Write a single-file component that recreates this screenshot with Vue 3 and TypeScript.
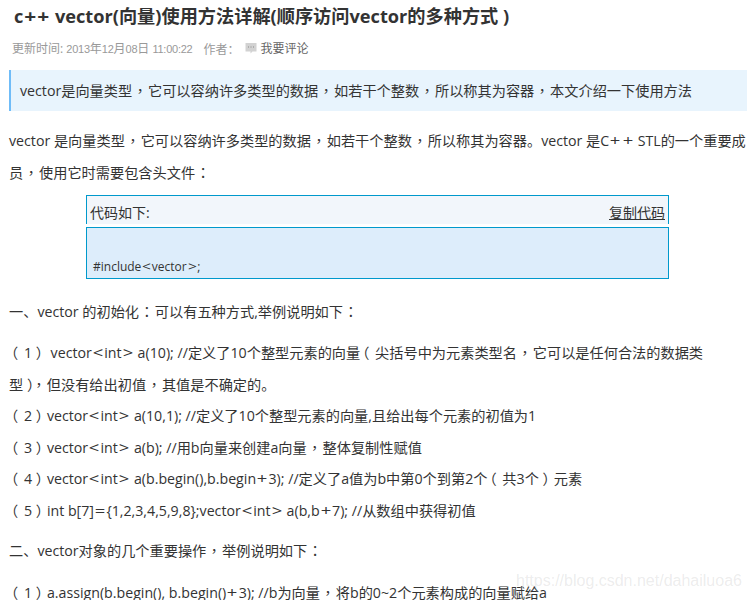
<script setup lang="ts">
interface Segment { text: string; kind: string }

function kindOf(part: string): string {
  if (part === '，' || part === '：') return 'punct'
  if (part === '（') return 'open'
  if (part === '）') return 'close'
  if (part === '<' || part === '>' || part === '+' || part === '=') return 'sym'
  return ''
}

function split(text: string): Segment[] {
  return text
    .split(/([，：（）<>+=])/)
    .filter((part) => part !== '')
    .map((part) => ({ text: part, kind: kindOf(part) }))
}

const intro = split('vector 是向量类型，它可以容纳许多类型的数据，如若干个整数，所以称其为容器。vector 是C++ STL的一个重要成\n员，使用它时需要包含头文件：')
const summary = split('vector是向量类型，它可以容纳许多类型的数据，如若干个整数，所以称其为容器，本文介绍一下使用方法')
const code = split('#include<vector>;')
const headOne = split('一、vector 的初始化：可以有五种方式,举例说明如下：')
const headTwo = split('二、vector对象的几个重要操作，举例说明如下：')
const headThree = split('（ 1 ）a.assign(b.begin(), b.begin()+3); //b为向量，将b的0~2个元素构成的向量赋给a')
const lines: Segment[][] = [
  '（ 1 ） vector<int> a(10); //定义了10个整型元素的向量（ 尖括号中为元素类型名，它可以是任何合法的数据类\n型 ），但没有给出初值，其值是不确定的。',
  '（ 2 ）vector<int> a(10,1); //定义了10个整型元素的向量,且给出每个元素的初值为1',
  '（ 3 ）vector<int> a(b); //用b向量来创建a向量，整体复制性赋值',
  '（ 4 ）vector<int> a(b.begin(),b.begin+3); //定义了a值为b中第0个到第2个（ 共3个 ）元素',
  '（ 5 ）int b[7]={1,2,3,4,5,9,8};vector<int> a(b,b+7); //从数组中获得初值',
].map(split)
</script>

<template>
  <div class="page">
    <h1 class="title">c<span class="plus">+</span><span class="plus">+</span> vector(向量)使用方法详解(顺序访问vector的多种方式 )</h1>
    <div class="meta">
      <span>更新时间:&nbsp;<span class="n">2013</span>年<span class="n">12</span>月<span class="n">08</span>日 <span class="n">11:00:22</span></span>
      <span class="author">作者：</span>
      <svg class="icon" width="12" height="12" viewBox="0 0 12 12">
        <path d="M0.5 1h11v8.5H7.5L5.5 11.5V9.5H0.5z" fill="#d2d2d2" />
        <path d="M3 5h1M5.5 5h1M8 5h1" stroke="#888" stroke-width="1" />
      </svg>
      <span class="comment">我要评论</span>
    </div>
    <div class="summary"><span v-for="(s, i) in summary" :key="i" :class="s.kind">{{ s.text }}</span></div>
    <p class="para intro"><span v-for="(s, i) in intro" :key="i" :class="s.kind">{{ s.text }}</span></p>
    <div class="code">
      <div class="code-head">
        <span>代码如下:</span>
        <a class="copy">复制代码</a>
      </div>
      <div class="code-body"><span v-for="(s, i) in code" :key="i" :class="s.kind">{{ s.text }}</span></div>
    </div>
    <p class="para head-one"><span v-for="(s, i) in headOne" :key="i" :class="s.kind">{{ s.text }}</span></p>
    <div class="items">
      <p v-for="(line, n) in lines" :key="n" class="para"><span v-for="(s, i) in line" :key="i" :class="s.kind">{{ s.text }}</span></p>
    </div>
    <p class="para head-two"><span v-for="(s, i) in headTwo" :key="i" :class="s.kind">{{ s.text }}</span></p>
    <p class="para head-three"><span v-for="(s, i) in headThree" :key="i" :class="s.kind">{{ s.text }}</span></p>
    <div class="watermark">https://blog.csdn.net/dahailuoa6</div>
  </div>
</template>

<style>
html, body { margin: 0; background: #fff; overflow: hidden; }
</style>

<style scoped>
.page {
  position: relative;
  width: 751px;
  height: 600px;
  overflow: hidden;
  padding: 0 0 0 9px;
  box-sizing: border-box;
  color: #333;
  font-family: "Open Sans", "Noto Sans CJK SC", sans-serif;
  font-size: 14.2px;
}
.punct {
  font-family: "Noto Sans CJK TC", sans-serif;
  margin: 0 0.8px;
  line-height: 1;
}
.open { margin: 0 2px 0 -5px; }
.close { margin-right: -3px; }
.sym {
  display: inline-block;
  margin: 0 0.15em;
  line-height: 1;
  transform: scaleX(1.3);
}
.plus {
  display: inline-block;
  margin: 0 1.5px;
  line-height: 1;
  transform: scaleX(1.15);
}
.title {
  margin: 0;
  padding: 3px 0 0 5px;
  font-size: 18.2px;
  line-height: 26px;
  font-weight: 700;
  white-space: nowrap;
}
.meta {
  display: flex;
  align-items: center;
  margin: 10px 0 0 3px;
  height: 18px;
  font-size: 12px;
  color: #999;
}
.n {
  font-family: "Liberation Sans", sans-serif;
  font-size: 11px;
  letter-spacing: -0.25px;
}
.author { margin-left: 11px; font-family: "Noto Sans CJK SC", sans-serif; }
.icon { margin-left: 6px; }
.comment { margin-left: 3px; color: #666; }
.summary {
  margin-top: 13px;
  height: 41px;
  line-height: 41px;
  padding-left: 9px;
  margin-right: 4px;
  background: #e8f4fd;
  border-left: 2px solid #6fbcf8;
  white-space: nowrap;
}
.para {
  margin: 0;
  line-height: 31.5px;
  white-space: pre-line;
}
.intro { margin-top: 14px; }
.code {
  width: 583px;
  margin: 7px 0 0 77px;
  font-size: 14px;
}
.code-head {
  display: flex;
  justify-content: space-between;
  align-items: center;
  box-sizing: border-box;
  height: 29px;
  padding: 3px 3px 0 3px;
  background: #f2f6fb;
  border: 1px solid #0099cc;
  border-bottom: 0;
}
.copy { text-decoration: underline; color: #333; }
.code-body {
  box-sizing: border-box;
  height: 52px;
  margin-top: 3px;
  padding: 30px 0 0 6px;
  line-height: 18px;
  font-size: 12px;
  background: #ddedfb;
  border: 1px solid #0099cc;
}
.head-one { margin-top: 17px; }
.items { margin-top: 9.5px; }
.head-two { margin-top: 9px; }
.head-three { margin-top: 10px; white-space: nowrap; }
.watermark {
  position: absolute;
  left: 516px;
  top: 572px;
  font-size: 16px;
  font-family: "Liberation Sans", sans-serif;
  color: rgba(120, 120, 120, 0.15);
  white-space: nowrap;
}
</style>
